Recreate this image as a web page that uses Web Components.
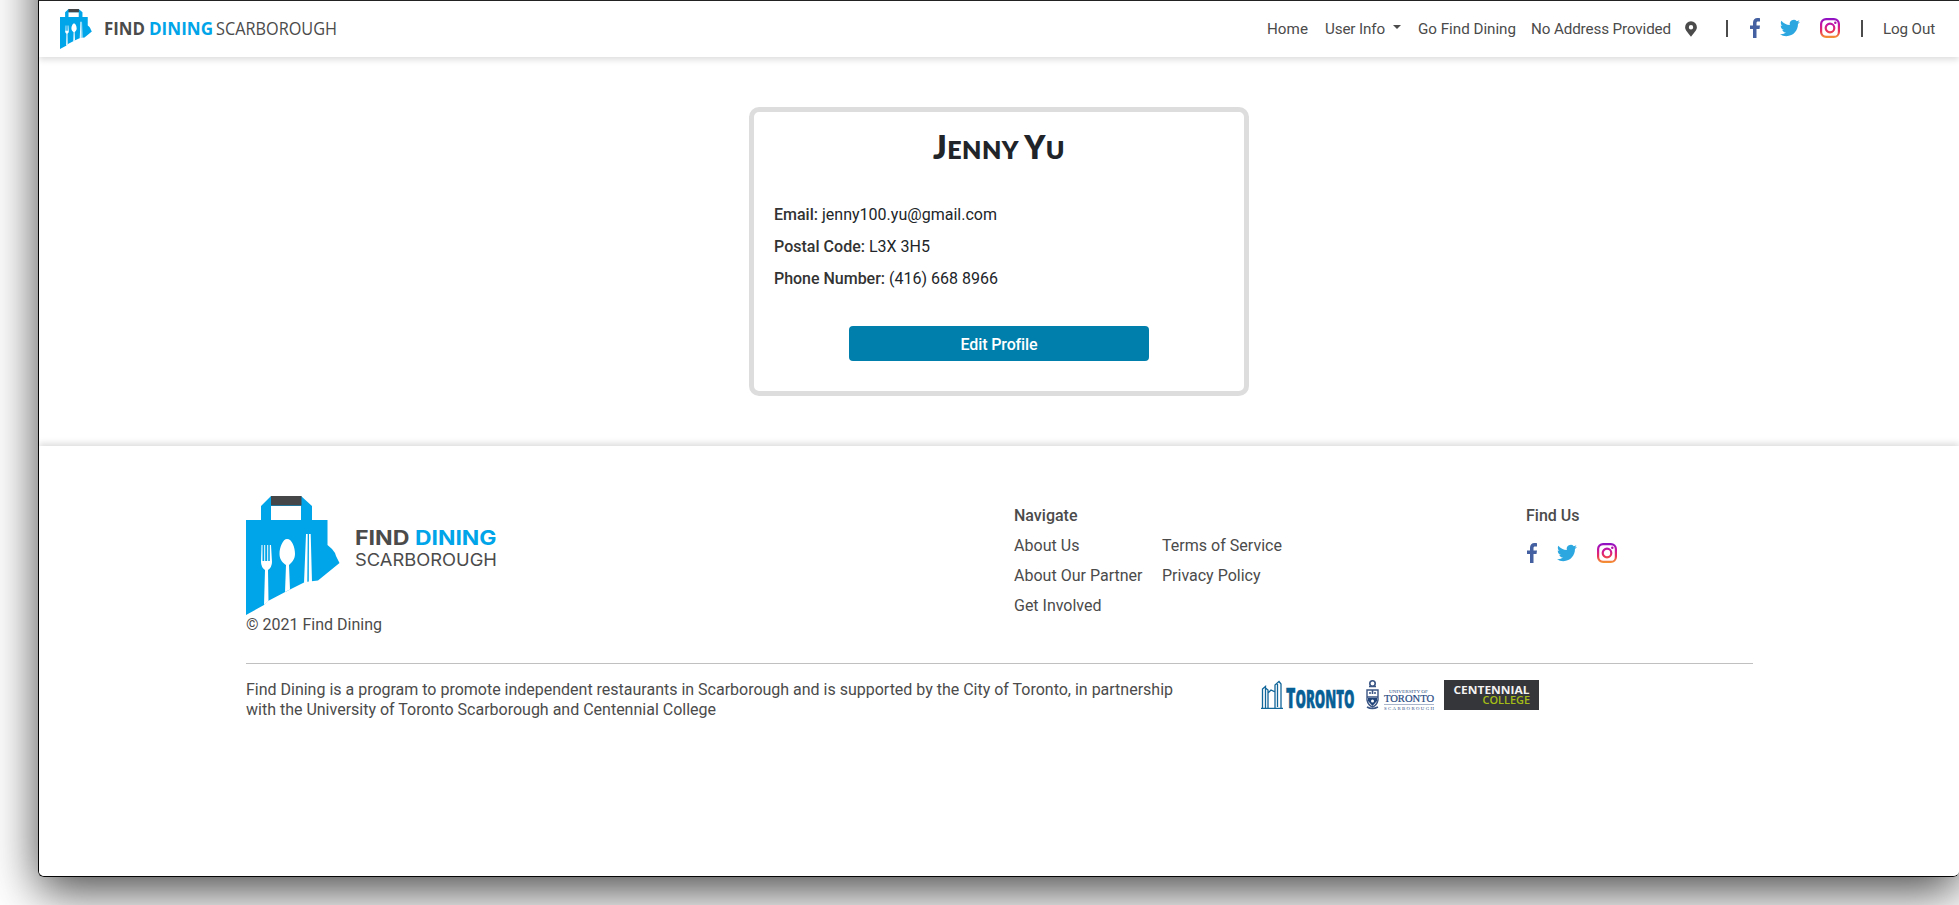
<!DOCTYPE html>
<html lang="en"><head><meta charset="utf-8"><title>Find Dining Scarborough</title>
<style>html,body{margin:0;height:905px;overflow:hidden;background:#fff}</style></head>
<body><app-window></app-window>
<script>
const define=(name,html)=>customElements.define(name,class extends HTMLElement{
  constructor(){super();this.attachShadow({mode:'open'}).innerHTML=html;}
});

/* A single line of text, tracked so that it fills the width given in "w". */
customElements.define('fit-text',class extends HTMLElement{
  constructor(){super();this.attachShadow({mode:'open'}).innerHTML='<style>:host{display:block;white-space:nowrap}span{display:inline-block}</style><span><slot></slot></span>';}
  connectedCallback(){
    const w=+this.getAttribute('w'),s=this.shadowRoot.querySelector('span');
    this.style.width=w+'px';
    const n=this.textContent.length,d=w-s.getBoundingClientRect().width;
    s.style.letterSpacing=(d/n)+'px';
  }
});

define('bag-logo',`<style>:host{display:block}svg{display:block;width:100%;height:100%}</style>
<svg viewBox="0 0 94 119" preserveAspectRatio="none">
<path fill="#00a4e8" d="M15 24V10L25 0H55L66 10V24H81.500V49L86 53L89 57L90 60L93.500 67L72 84.500L59 86L43 94L22 105L18 109L0 119V24ZM25 10V24H55V10Z"/>
<path fill="#454648" d="M25 0H55.500V9.500H25Z"/>
<path fill="#fff" d="M15.500 49H16.500V65H18.200V49H19.200V65H21.200V49H22.200V65H23.800V49H25L26 66Q26 71 22 74L22.500 105L18 109L19 74Q15 71 15 66Z"/>
<path fill="#fff" d="M41 43C46 43 49 51 49 58C49 64 45 67 43 69L44 93.500L39 96L40 69C37 67 33.500 64 33.500 58C33.500 51 37 43 41 43Z"/>
<path fill="#fff" d="M60 38H61.700L61.300 86L58 87ZM63 38H64.700L66 86L62.800 86Z"/></svg>`);

define('social-icons',`<style>:host{display:flex;gap:20px;height:20px}svg{display:block;height:20px;flex:none}</style>
<svg width="10" viewBox="0 0 10 20"><path fill="#4460a0" d="M3 20V11H0V7.400H3V4.800C3 1.700 4.800.1 7.500.1C8.800.1 9.900.2 10 .3V3.500H8.200C6.800 3.500 6.500 4.200 6.500 5.200V7.400H10L9.500 11H6.500V20Z"/></svg>
<svg width="20" viewBox="0 0 24 24"><path fill="#2ca7e0" d="M23.950 4.570a10 10 0 0 1-2.820.77 4.960 4.960 0 0 0 2.160-2.720c-.95.56-2 .96-3.130 1.190a4.920 4.920 0 0 0-8.380 4.480C7.690 8.100 4.070 6.130 1.640 3.160a4.820 4.820 0 0 0-.67 2.480c0 1.710.87 3.210 2.190 4.100a4.900 4.900 0 0 1-2.230-.62v.06a4.920 4.920 0 0 0 3.950 4.830 5 5 0 0 1-2.210.08 4.940 4.940 0 0 0 4.600 3.420A9.870 9.870 0 0 1 0 19.540a13.990 13.990 0 0 0 7.550 2.210c9.050 0 14-7.500 14-13.980 0-.21 0-.42-.02-.63a9.940 9.940 0 0 0 2.460-2.550z"/></svg>
<svg width="20" viewBox="0 0 20 20"><defs><linearGradient id="g" gradientUnits="userSpaceOnUse" x1="0" y1="0" x2="0" y2="20"><stop offset="0" stop-color="#8a12c8"/><stop offset=".35" stop-color="#c815a0"/><stop offset=".65" stop-color="#e8305c"/><stop offset="1" stop-color="#f59a30"/></linearGradient></defs><g fill="none" stroke="url(#g)" stroke-width="2.200"><rect x="1.100" y="1.100" width="17.800" height="17.800" rx="5"/><circle cx="10" cy="10" r="4.300"/></g><circle cx="15.300" cy="4.700" r="1.250" fill="#b014a8"/></svg>`);

define('top-bar',`<style>
:host{display:flex;align-items:center;height:56px;background:#fff;box-shadow:0 3px 6px rgba(0,0,0,.13);font:15.2px/20px Roboto,sans-serif;color:#4b4b4b;position:relative;box-sizing:border-box;padding:0 0 1px 21px}
bag-logo{width:32px;height:40px;margin-right:12px}
nav{margin-left:auto;display:flex;align-items:center;width:692px}
.brand{display:block;overflow:visible}
nav>*{flex:none}
social-icons{margin-bottom:1px}
.caret{width:0;border:4.500px solid transparent;border-top-color:#4b4b4b;border-bottom:0;margin:0 17px 3px 8px}
i{width:2px;height:17px;background:#4b4b4b}
</style>
<bag-logo></bag-logo>
<svg class="brand" width="236" height="26" font-family="'Open Sans','Noto Sans',sans-serif" font-size="18" fill="#4b4b4b"><text x="0" y="19" font-weight="700" textLength="41" lengthAdjust="spacingAndGlyphs">FIND</text><text x="45" y="19" font-weight="700" fill="#00a4e8" textLength="64" lengthAdjust="spacingAndGlyphs">DINING</text><text x="112" y="19" textLength="121" lengthAdjust="spacingAndGlyphs">SCARBOROUGH</text></svg>
<nav><fit-text w="41">Home</fit-text><fit-text w="60" style="margin-left:17px">User Info</fit-text><span class="caret"></span><fit-text w="98">Go Find Dining</fit-text><fit-text w="140" style="margin-left:15px">No Address Provided</fit-text>
<svg style="margin-left:14px" width="12" height="16" viewBox="0 0 12 16"><path fill="#4b4b4b" fill-rule="evenodd" d="M6 .3A5.900 5.900 0 0 0 .1 6.200C.1 9.500 3.500 12 6 15.700C8.500 12 11.900 9.500 11.900 6.200A5.900 5.900 0 0 0 6 .3ZM6 4A2.200 2.200 0 1 1 6 8.400A2.200 2.200 0 0 1 6 4Z"/></svg>
<i style="margin:0 22px 0 29px"></i><social-icons></social-icons><i style="margin:0 20px 0 21px"></i><fit-text w="52">Log Out</fit-text></nav>`);

define('profile-card',`<style>
:host{display:flex;flex-direction:column;box-sizing:border-box;width:500px;height:289px;border:5px solid #ddd;border-radius:10px;padding:15px 20px 0;font:16px/20px Roboto,sans-serif;color:#212529;margin:50px auto 0}
h1{font:800 25px/44px Lato,sans-serif;margin:0 auto;height:44px}
h1 span{font-size:31.500px;line-height:30px}
h1 fit-text{text-transform:uppercase}
.rows{display:grid;row-gap:12px;margin-top:34px}
.rows>div{display:flex;gap:4px}
b{font-weight:500;color:#333}
button{font:500 16px/36px Roboto,sans-serif;letter-spacing:-.12px;color:#fff;background:#007fac;border:0;border-radius:4px;width:300px;height:35px;padding:1px 0 0;margin:37px auto 0}
</style><h1><fit-text w="132"><span>J</span>enny <span>Y</span>u</fit-text></h1>
<div class="rows"><div><b><fit-text w="44">Email:</fit-text></b><fit-text w="175">jenny100.yu@gmail.com</fit-text></div>
<div><b><fit-text w="91">Postal Code:</fit-text></b><fit-text w="61">L3X 3H5</fit-text></div>
<div><b><fit-text w="111">Phone Number:</fit-text></b><fit-text w="109">(416) 668 8966</fit-text></div></div>
<button>Edit Profile</button>`);

define('partner-logos',`<style>:host{display:flex;width:280px;height:30px}svg{display:block;flex:none;overflow:visible}</style>
<svg width="94" height="30" viewBox="0 0 94 30"><g fill="none" stroke="#11669a" stroke-width="1.300"><path d="M1.500 28V9L4.500 6.500V28M4.500 8L7 10V28M7 28V13L10 10L14 12V28M14 28V5L18 1.500L20 4V28M16.500 4V27M0 28.300H22"/></g><text y="28" fill="#075f96" stroke="#075f96" stroke-width=".6" font-family="'Open Sans','Noto Sans',sans-serif" font-weight="800" font-size="24" x="25" textLength="68.500" lengthAdjust="spacingAndGlyphs"><tspan font-size="29">T</tspan>ORONTO</text></svg>
<svg style="margin-left:11px" width="69" height="30" viewBox="0 0 69 30"><g fill="none" stroke="#3b5685"><circle cx="6.500" cy="3.500" r="2.700" stroke-width="1.600"/><path d="M3 6.500H10M1 10H12V20Q11 25 6.500 27Q2 25 1 20Z" stroke-width="1.400"/><path d="M1 17H12M6.500 10V14M3 13H5M8 13H10M1 27Q6 30 12 27" stroke-width="1.600"/></g><path fill="#20447a" d="M2 18H11V21L6.500 26L2 21Z"/><circle cx="6.500" cy="21" r="1.500" fill="#fff"/><g fill="#294b83" font-family="'Liberation Serif',serif"><text x="23" y="12.500" font-size="5" textLength="39" lengthAdjust="spacingAndGlyphs">UNIVERSITY OF</text><text x="18" y="22" font-size="10" stroke="#294b83" stroke-width=".2" textLength="50" lengthAdjust="spacingAndGlyphs">TORONTO</text><text x="18" y="30" font-size="4.800" textLength="50" lengthAdjust="spacing">SCARBOROUGH</text></g><path stroke="#8495b5" stroke-width=".7" d="M18 24.500H68"/></svg>
<svg style="margin-left:9px" width="95" height="30"><path fill="#35363a" d="M0 0H95V30H0Z"/><g font-family="'Open Sans',sans-serif" font-size="10"><text x="9.500" y="14" font-weight="700" fill="#f3f3f3" textLength="76" lengthAdjust="spacingAndGlyphs">CENTENNIAL</text><text x="38.500" y="24" font-weight="600" fill="#a4bd16" textLength="47.500" lengthAdjust="spacingAndGlyphs">COLLEGE</text></g></svg>`);

define('site-footer',`<style>
:host{display:block;height:430px;background:#fff;box-shadow:0 -3px 6px rgba(0,0,0,.13);font:16px/20px Roboto,sans-serif;color:#4b4b4b;box-sizing:border-box;padding:50px 206px 0 207px}
.top{display:grid;grid-template-columns:768px 512px 1fr;height:167px;border-bottom:1px solid #c0c0c0}
.logo{display:flex}.logo bag-logo{width:94px;height:119px}.logo svg{margin:28px 0 0 15px;overflow:visible}
b{display:block;font-weight:500}
.links{display:grid;grid-template-columns:148px auto;grid-auto-rows:20px;gap:10px 0;justify-content:start;margin-top:10px}
.find b{margin:10px 0 17px}
.find social-icons{margin-left:1px}
.bottom{display:flex;padding-top:16px}
.bottom p{margin:0;width:1015px}
</style>
<div class="top"><div><div class="logo"><bag-logo></bag-logo>
<svg width="144" height="48" font-family="Inter,sans-serif" fill="#4b4b4b"><text x="0" y="21" font-size="20" font-weight="700" textLength="54.500" lengthAdjust="spacingAndGlyphs">FIND</text><text x="60" y="21" font-size="20" font-weight="700" fill="#00a4e8" textLength="81.500" lengthAdjust="spacingAndGlyphs">DINING</text><text x="0" y="42" font-size="17" textLength="142" lengthAdjust="spacingAndGlyphs">SCARBOROUGH</text></svg></div>
<fit-text w="136">© 2021 Find Dining</fit-text></div>
<div class="links"><b>Navigate</b><span></span><fit-text w="65.500">About Us</fit-text><fit-text w="120">Terms of Service</fit-text><fit-text w="128.500">About Our Partner</fit-text><fit-text w="98.500">Privacy Policy</fit-text><fit-text w="87.500">Get Involved</fit-text></div>
<div class="find"><b>Find Us</b><social-icons></social-icons></div></div>
<div class="bottom"><p><fit-text w="927">Find Dining is a program to promote independent restaurants in Scarborough and is supported by the City of Toronto, in partnership</fit-text><fit-text w="470">with the University of Toronto Scarborough and Centennial College</fit-text></p><partner-logos></partner-logos></div>`);

define('app-window',`<style>
:host{display:block;position:relative;height:877px;width:1921px;margin-left:38px;box-sizing:border-box}
.shadow{position:absolute;inset:-120px 0 0 0;border-radius:6px;box-shadow:0 14px 48px rgba(0,0,0,.72)}
.page{position:relative;box-sizing:border-box;height:877px;display:flex;flex-direction:column;background:#fff;border:1px solid #050505;border-top-color:#222;border-right:0;border-radius:0 0 6px 6px;overflow:hidden}
main{flex:1}
site-footer{flex:none}
</style><div class="shadow"></div><div class="page"><top-bar></top-bar><main><profile-card></profile-card></main><site-footer></site-footer></div>`);
</script></body></html>
